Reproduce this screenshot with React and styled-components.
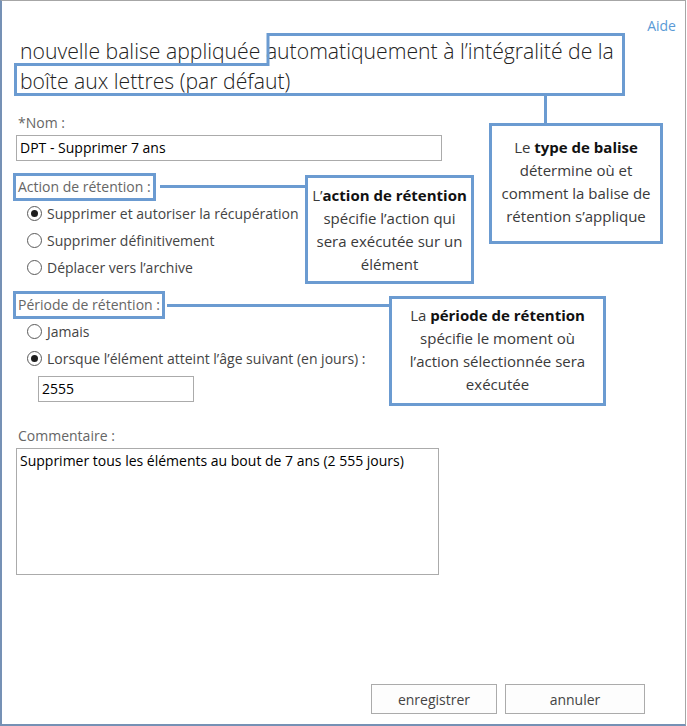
import styled, { createGlobalStyle } from 'styled-components'

const GlobalStyle = createGlobalStyle`
  html, body {
    margin: 0;
    padding: 0;
    background: #fff;
  }
  body {
    font-family: "Open Sans", "Noto Sans", "Liberation Sans", sans-serif;
    font-size: 14px;
    color: #444;
  }
`

const accent = '#6b9bd1'

const Frame = styled.div`
  position: relative;
  box-sizing: border-box;
  width: 686px;
  height: 726px;
  border-top: 1px solid #a6a6a6;
  border-left: 2px solid #7591b5;
  border-right: 1px solid #a6a6a6;
  border-bottom: 2px solid #7591b5;
  padding: 0 0 10px 14px;
  display: flex;
  flex-direction: column;
`

const HelpRow = styled.div`
  display: flex;
  justify-content: flex-end;
  padding: 16px 9px 0 0;
  line-height: 18px;
`

const HelpLink = styled.a`
  color: #5a9ad6;
  font-size: 14px;
  text-decoration: none;
`

const Heading = styled.h1`
  margin: 1px 0 0 4px;
  width: 604px;
  font-size: 21.2px;
  font-weight: 300;
  line-height: 30px;
  color: #222;
`

const FieldLabel = styled.div`
  align-self: flex-start;
  margin-top: ${(p) => p.$mt || 0}px;
  margin-left: 2px;
  line-height: 18px;
  color: #666;
  outline: ${(p) => (p.$boxed ? `3px solid ${accent}` : 'none')};
  outline-offset: 2px;
`

const TextInput = styled.div`
  box-sizing: border-box;
  width: ${(p) => p.$w}px;
  height: 26px;
  margin: ${(p) => p.$m};
  border: 1px solid #ababab;
  padding: 0 3px;
  line-height: 24px;
  color: #000;
`

const TextArea = styled.div`
  box-sizing: border-box;
  width: 423px;
  height: 127px;
  margin-top: 3px;
  border: 1px solid #ababab;
  padding: 0 3px;
  line-height: 24px;
  color: #000;
`

const RadioGroup = styled.div`
  margin: 4px 0 0 11px;
  display: flex;
  flex-direction: column;
`

const RadioRow = styled.label`
  display: flex;
  align-items: center;
  gap: 5px;
  height: 27px;
  color: #444;
`

const RadioDot = styled.span`
  box-sizing: border-box;
  width: 15px;
  height: 15px;
  border-radius: 50%;
  border: 1px solid #5a5a5a;
  display: flex;
  align-items: center;
  justify-content: center;
  &::after {
    content: '';
    width: 7px;
    height: 7px;
    border-radius: 50%;
    background: ${(p) => (p.$on ? '#1e1e1e' : 'transparent')};
  }
`

const Footer = styled.div`
  margin-top: auto;
  display: flex;
  justify-content: flex-end;
  gap: 8px;
  padding-right: 40px;
`

const Button = styled.button`
  box-sizing: border-box;
  width: ${(p) => p.$w}px;
  height: 30px;
  border: 1px solid #ababab;
  background: #fdfdfd;
  color: #444;
  font-family: inherit;
  font-size: 14px;
`

const Overlay = styled.div`
  position: absolute;
  left: -2px;
  top: -1px;
  width: 687px;
  height: 726px;
  pointer-events: none;
`

const Callout = styled.div`
  position: absolute;
  box-sizing: border-box;
  border: 3px solid ${accent};
  background: #fff;
  text-align: center;
  color: #3a3a3a;
  font-size: 15px;
  line-height: 23px;
  white-space: nowrap;
  b {
    color: #111;
    font-weight: 700;
  }
`

const Line = styled.div`
  position: absolute;
  background: ${accent};
`

const radios = {
  action: [
    ['Supprimer et autoriser la récupération', true],
    ['Supprimer définitivement', false],
    ['Déplacer vers l’archive', false],
  ],
  period: [
    ['Jamais', false],
    ['Lorsque l’élément atteint l’âge suivant (en jours) :', true],
  ],
}

const Radios = ({ items }) => (
  <RadioGroup>
    {items.map(([text, on]) => (
      <RadioRow key={text}>
        <RadioDot $on={on} />
        {text}
      </RadioRow>
    ))}
  </RadioGroup>
)

export default function App() {
  return (
    <>
      <GlobalStyle />
      <Frame>
        <HelpRow>
          <HelpLink href="#">Aide</HelpLink>
        </HelpRow>
        <Heading>
          nouvelle balise appliquée automatiquement à l’intégralité de la boîte aux lettres (par défaut)
        </Heading>

        <FieldLabel $mt={18}>*Nom :</FieldLabel>
        <TextInput $w={426} $m="3px 0 0 0">DPT - Supprimer 7 ans</TextInput>

        <FieldLabel $mt={17} $boxed>Action de rétention :</FieldLabel>
        <Radios items={radios.action} />

        <FieldLabel $mt={15} $boxed>Période de rétention :</FieldLabel>
        <Radios items={radios.period} />
        <TextInput $w={156} $m="4px 0 0 22px">2555</TextInput>

        <FieldLabel $mt={25}>Commentaire :</FieldLabel>
        <TextArea>Supprimer tous les éléments au bout de 7 ans (2 555 jours)</TextArea>

        <Footer>
          <Button $w={126}>enregistrer</Button>
          <Button $w={140}>annuler</Button>
        </Footer>

        <Overlay>
          <svg width="687" height="726" style={{ position: 'absolute', left: 0, top: 0 }}>
            <path
              d="M268 34.5 H623.5 V94.5 H15.5 V64.5 H268 Z"
              fill="none"
              stroke={accent}
              strokeWidth="3"
            />
          </svg>
          <Line style={{ left: 544, top: 95, width: 3, height: 29 }} />
          <Line style={{ left: 160, top: 185, width: 146, height: 3 }} />
          <Line style={{ left: 167, top: 304, width: 223, height: 3 }} />

          <Callout style={{ left: 489, top: 123, width: 174, height: 121, paddingTop: 10 }}>
            Le <b>type de balise</b>
            <br />
            détermine où et
            <br />
            comment la balise de
            <br />
            rétention s’applique
          </Callout>
          <Callout style={{ left: 305, top: 175, width: 169, height: 109, paddingTop: 6 }}>
            L’<b>action de rétention</b>
            <br />
            spécifie l’action qui
            <br />
            sera exécutée sur un
            <br />
            élément
          </Callout>
          <Callout style={{ left: 389, top: 296, width: 217, height: 110, paddingTop: 5 }}>
            La <b>période de rétention</b>
            <br />
            spécifie le moment où
            <br />
            l’action sélectionnée sera
            <br />
            exécutée
          </Callout>
        </Overlay>
      </Frame>
    </>
  )
}
